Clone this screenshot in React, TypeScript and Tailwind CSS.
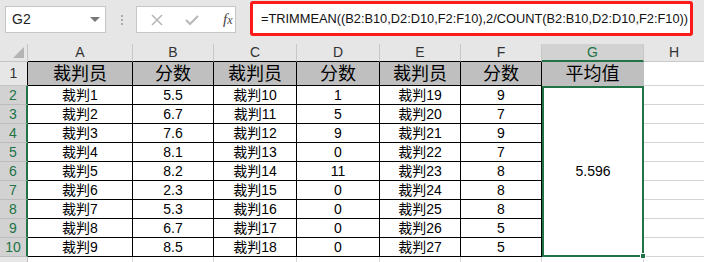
import React from "react";

const judges = [
  ["裁判1", "5.5", "裁判10", "1", "裁判19", "9"],
  ["裁判2", "6.7", "裁判11", "5", "裁判20", "7"],
  ["裁判3", "7.6", "裁判12", "9", "裁判21", "9"],
  ["裁判4", "8.1", "裁判13", "0", "裁判22", "7"],
  ["裁判5", "8.2", "裁判14", "11", "裁判23", "8"],
  ["裁判6", "2.3", "裁判15", "0", "裁判24", "8"],
  ["裁判7", "5.3", "裁判16", "0", "裁判25", "8"],
  ["裁判8", "6.7", "裁判17", "0", "裁判26", "5"],
  ["裁判9", "8.5", "裁判18", "0", "裁判27", "5"],
];

const headers = ["裁判员", "分数", "裁判员", "分数", "裁判员", "分数"];
const letters = ["A", "B", "C", "D", "E", "F"];

const font = {
  fontFamily: '"Liberation Sans", "Noto Sans CJK SC", sans-serif',
};

export default function App() {
  return (
    <div
      className="w-[704px] h-[262px] overflow-hidden bg-white text-black"
      style={font}
    >
      {/* Formula bar */}
      <div className="h-[44px] bg-[#e6e6e6] flex items-start">
        <div className="ml-[5px] mt-[6px] w-[101px] h-[27px] bg-white border border-[#c6c6c6] flex items-center justify-between pl-[6px] pr-[5px]">
          <span className="text-[14px] text-[#222]">G2</span>
          <span className="w-0 h-0 border-l-[5px] border-r-[5px] border-t-[5px] border-l-transparent border-r-transparent border-t-[#777]" />
        </div>
        <div className="ml-[15px] mt-[15px] flex flex-col gap-[2px]">
          <span className="w-[2px] h-[2px] bg-[#aaa]" />
          <span className="w-[2px] h-[2px] bg-[#aaa]" />
          <span className="w-[2px] h-[2px] bg-[#aaa]" />
        </div>
        <div className="ml-[13px] mt-[6px] w-[100px] h-[27px] bg-white border border-[#c6c6c6] flex items-center">
          <svg className="ml-[14px]" width="12" height="12" viewBox="0 0 12 12">
            <path d="M1 1 L11 11 M11 1 L1 11" stroke="#b8b8b8" strokeWidth="1.6" />
          </svg>
          <svg className="ml-[22px]" width="14" height="12" viewBox="0 0 14 12">
            <path d="M1 6 L5 10 L13 2" stroke="#b8b8b8" strokeWidth="2" fill="none" />
          </svg>
          <span
            className="ml-[24px] text-[15px] italic text-[#444]"
            style={{ fontFamily: '"Liberation Serif", serif' }}
          >
            f<span className="text-[12px]">x</span>
          </span>
        </div>
        <div className="ml-[14px] mt-[1px] w-[443px] h-[35px] bg-white border-[3px] border-[#ff1a1a] rounded-[3px] flex items-center pl-[8px]">
          <span className="text-[12.8px] text-[#111] whitespace-nowrap">
            =TRIMMEAN((B2:B10,D2:D10,F2:F10),2/COUNT(B2:B10,D2:D10,F2:F10))
          </span>
        </div>
      </div>

      {/* Sheet grid */}
      <div className="grid grid-cols-[28px_105px_81px_83px_83px_81px_81px_102px_60px] grid-rows-[18px_24px_repeat(9,19px)_19px]">
        {/* column header row */}
        <div className="relative bg-[#e6e6e6] border-r border-b border-[#c4c4c4]">
          <svg className="absolute right-[3px] bottom-[3px]" width="11" height="11" viewBox="0 0 11 11">
            <path d="M11 0 L11 11 L0 11 Z" fill="#b4b4b4" />
          </svg>
        </div>
        {letters.map((l) => (
          <div
            key={l}
            className="bg-[#e6e6e6] border-r border-b border-r-[#c8c8c8] border-b-black flex items-center justify-center text-[14px] text-[#333]"
          >
            {l}
          </div>
        ))}
        <div className="bg-[#d2d2d2] border-r border-r-[#c8c8c8] border-b-2 border-b-[#217346] flex items-center justify-center text-[14px] text-[#217346]">
          G
        </div>
        <div className="bg-[#e6e6e6] border-b border-[#c8c8c8] flex items-center justify-center text-[14px] text-[#333]">
          H
        </div>

        {/* row 1 */}
        <div className="bg-[#e6e6e6] border-r border-r-black border-b border-b-[#c4c4c4] flex items-center justify-center text-[14px] text-[#333]">
          1
        </div>
        {headers.map((h, i) => (
          <div
            key={i}
            className="bg-[#bfbfbf] border-r border-b border-black flex items-center justify-center text-[18px] leading-none"
          >
            {h}
          </div>
        ))}
        <div className="bg-[#bfbfbf] border-r border-[#bfbfbf] flex items-center justify-center text-[18px] leading-none">
          平均值
        </div>
        <div className="border-b border-[#d4d4d4]" />

        {/* rows 2-10 */}
        {judges.map((row, r) => (
          <React.Fragment key={r}>
            <div className="bg-[#d2d2d2] border-r-2 border-r-[#217346] border-b border-b-[#bcbcbc] flex items-center justify-center text-[14px] text-[#217346]">
              {r + 2}
            </div>
            {row.map((v, c) => (
              <div
                key={c}
                className="border-r border-b border-black flex items-center justify-center text-[14px] leading-none"
              >
                {v}
              </div>
            ))}
            {r === 0 && (
              <div className="relative row-span-9 border-2 border-[#217346] flex items-center justify-center text-[14px]">
                5.596
                <span className="absolute -right-[4px] -bottom-[4px] w-[6px] h-[6px] bg-[#217346] border border-white" />
              </div>
            )}
            <div className="border-b border-[#d4d4d4]" />
          </React.Fragment>
        ))}

        {/* row 11 */}
        <div className="bg-[#e6e6e6] border-r border-[#c4c4c4]" />
        {letters.map((l) => (
          <div key={l} className="border-r border-[#d4d4d4]" />
        ))}
        <div className="border-r border-[#d4d4d4]" />
        <div />
      </div>
    </div>
  );
}
